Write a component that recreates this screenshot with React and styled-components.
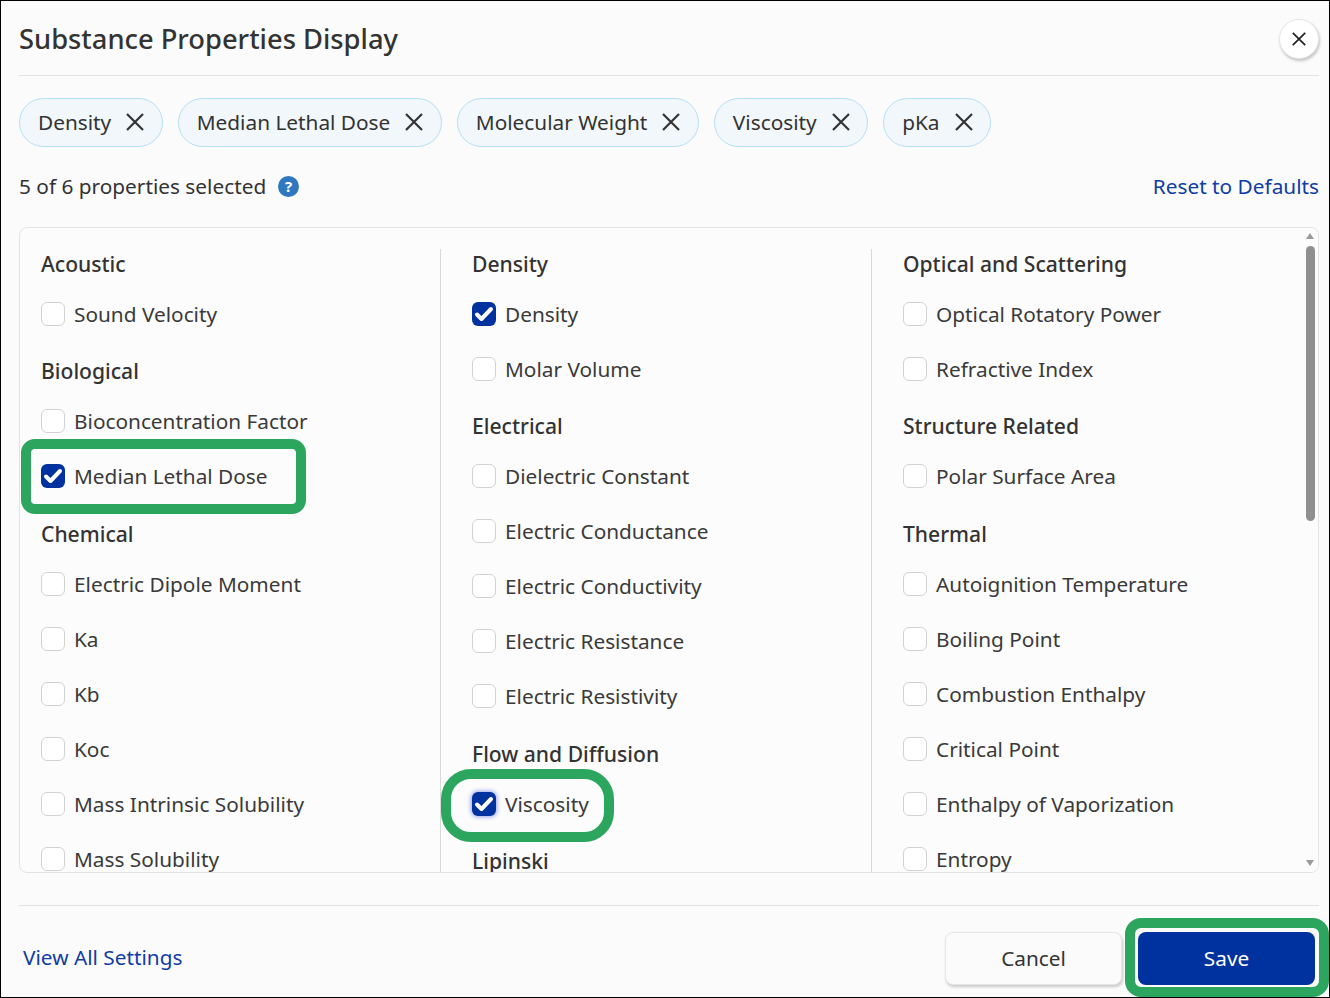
import React from "react";
import styled, { createGlobalStyle } from "styled-components";

const Global = createGlobalStyle`
  html, body { margin: 0; padding: 0; }
  body { font-family: "Noto Sans", "Open Sans", sans-serif; color: #333; }
`;

const Page = styled.div`
  position: relative;
  box-sizing: border-box;
  width: 1330px;
  height: 998px;
  border: 1px solid #000;
  background: #fbfbfb;
  overflow: hidden;
  padding: 0 10px 0 18px;
  display: flex;
  flex-direction: column;
`;

const Header = styled.header`
  height: 74px;
  display: flex;
  align-items: center;
  justify-content: space-between;
  border-bottom: 1px solid #e3e3e3;
  box-sizing: content-box;
`;

const Title = styled.h1`
  margin: 2px 0 0;
  font-size: 27.3px;
  font-weight: 500;
  line-height: 36px;
  color: #333;
`;

const CloseButton = styled.button`
  width: 40px;
  height: 40px;
  margin-top: 2px;
  padding: 0;
  border: 1px solid #e6e6e6;
  border-radius: 50%;
  background: #fff;
  box-shadow: 1px 2px 3px rgba(0, 0, 0, 0.22);
  display: flex;
  align-items: center;
  justify-content: center;
  color: #222;
`;

const Chips = styled.div`
  display: flex;
  gap: 15px;
  margin-top: 22px;
`;

const Chip = styled.div`
  box-sizing: border-box;
  height: 49px;
  display: flex;
  align-items: center;
  gap: 15px;
  padding: 0 17.5px 2px 18px;
  border: 1px solid #b3dff5;
  border-radius: 25px;
  background: #f2f7fc;
  font-size: 20.8px;
  color: #333;
`;

const Status = styled.div`
  display: flex;
  align-items: center;
  justify-content: space-between;
  height: 30px;
  margin-top: 24px;
  margin-bottom: 1px;
  font-size: 20.8px;
`;

const StatusText = styled.div`
  display: flex;
  align-items: center;
  gap: 12px;
`;

const Link = styled.a`
  color: #0f3da6;
  font-size: 20.8px;
  text-decoration: none;
`;

const FooterLink = styled(Link)`
  padding-bottom: 3px;
`;

const Panel = styled.div`
  position: relative;
  box-sizing: border-box;
  height: 646px;
  margin-top: 25px;
  border: 1px solid #e3e3e3;
  border-radius: 8px;
  background: #fcfcfc;
  overflow: hidden;
  display: flex;
  padding: 21px 0 0 21px;
`;

const Column = styled.div`
  box-sizing: border-box;
  flex: none;
  width: ${(p) => p.$width}px;
  padding-left: ${(p) => (p.$first ? 0 : 31)}px;
  border-left: ${(p) => (p.$first ? "none" : "1px solid #d8d8d8")};
`;

const Section = styled.section`
  & + & {
    margin-top: 15px;
  }
`;

const Heading = styled.h2`
  margin: 0 0 7.4px;
  font-size: 21.1px;
  line-height: 30px;
  font-weight: 500;
  color: #333;
`;

const Item = styled.label`
  position: relative;
  height: 55px;
  display: flex;
  align-items: center;
  gap: 9px;
  font-size: 20.8px;
  color: #3a3a3a;
`;

const Box = styled.span`
  box-sizing: border-box;
  flex: none;
  width: 24px;
  height: 24px;
  border-radius: 6px;
  border: ${(p) => (p.$checked ? "none" : "1px solid #d2d2d2")};
  background: ${(p) => (p.$checked ? "#00329f" : "#fff")};
  box-shadow: ${(p) => (p.$glow ? "0 0 4px 1px rgba(60,90,220,.55)" : "none")};
  display: flex;
  align-items: center;
  justify-content: center;
`;

const ScrollBar = styled.div`
  position: absolute;
  top: 0;
  right: 0;
  bottom: 0;
  width: 13px;
  background: #fcfcfc;
`;

const Thumb = styled.div`
  position: absolute;
  top: 18px;
  left: 1px;
  width: 9px;
  height: 275px;
  border-radius: 5px;
  background: #8f8f8f;
`;

const Arrow = styled.div`
  position: absolute;
  left: 1px;
  width: 0;
  height: 0;
  border-left: 4.5px solid transparent;
  border-right: 4.5px solid transparent;
  ${(p) =>
    p.$up
      ? "top: 5px; border-bottom: 6px solid #9a9a9a;"
      : "bottom: 6px; border-top: 6px solid #9a9a9a;"}
`;

const Footer = styled.footer`
  position: relative;
  margin-top: 32px;
  border-top: 1px solid #e3e3e3;
  padding: 26px 4px 0 4px;
  display: flex;
  align-items: center;
  justify-content: space-between;
`;

const Actions = styled.div`
  display: flex;
  gap: 16px;
`;

const Button = styled.button`
  box-sizing: border-box;
  width: 177px;
  height: 53px;
  padding: 0 0 2px;
  border-radius: 8px;
  font-family: inherit;
  font-size: 20.8px;
  border: ${(p) => (p.$primary ? "none" : "1px solid #e6e6e6")};
  color: ${(p) => (p.$primary ? "#fff" : "#333")};
  background: ${(p) => (p.$primary ? "#00329f" : "#fbfbfb")};
  box-shadow: ${(p) => (p.$primary ? "none" : "1px 2px 3px rgba(0,0,0,.2)")};
`;

const Highlight = styled.span`
  position: absolute;
  box-sizing: border-box;
  border: 10px solid #2ca65e;
  pointer-events: none;
  border-radius: ${(p) => p.$radius}px;
  left: ${(p) => p.$left}px;
  top: ${(p) => p.$top}px;
  width: ${(p) => p.$w}px;
  height: ${(p) => p.$h}px;
`;

const XIcon = ({ size = 18 }) => (
  <svg width={size} height={size} viewBox="0 0 18 18" fill="none" stroke="currentColor" strokeWidth="2.2">
    <path d="M1 1 17 17M17 1 1 17" />
  </svg>
);

const Check = () => (
  <svg width="20" height="16" viewBox="0 0 20 16" fill="none" stroke="#fff" strokeWidth="4" strokeLinecap="round" strokeLinejoin="round">
    <path d="M3 8.5 7.5 13 17 3" />
  </svg>
);

const Help = () => (
  <svg width="21" height="21" viewBox="0 0 21 21">
    <circle cx="10.5" cy="10.5" r="10.5" fill="#2f78c0" />
    <text x="10.5" y="16" textAnchor="middle" fontSize="15" fontWeight="700" fill="#fff" fontFamily="Noto Sans">?</text>
  </svg>
);

const chips = ["Density", "Median Lethal Dose", "Molecular Weight", "Viscosity", "pKa"];

const columns = [
  {
    width: 399,
    sections: [
      ["Acoustic", ["Sound Velocity"]],
      ["Biological", ["Bioconcentration Factor", "Median Lethal Dose"]],
      ["Chemical", ["Electric Dipole Moment", "Ka", "Kb", "Koc", "Mass Intrinsic Solubility", "Mass Solubility"]],
    ],
  },
  {
    width: 431,
    sections: [
      ["Density", ["Density", "Molar Volume"]],
      ["Electrical", ["Dielectric Constant", "Electric Conductance", "Electric Conductivity", "Electric Resistance", "Electric Resistivity"]],
      ["Flow and Diffusion", ["Viscosity"]],
      ["Lipinski", []],
    ],
  },
  {
    width: 420,
    sections: [
      ["Optical and Scattering", ["Optical Rotatory Power", "Refractive Index"]],
      ["Structure Related", ["Polar Surface Area"]],
      ["Thermal", ["Autoignition Temperature", "Boiling Point", "Combustion Enthalpy", "Critical Point", "Enthalpy of Vaporization", "Entropy"]],
    ],
  },
];

const checked = new Set(["Density", "Median Lethal Dose", "Viscosity"]);

export default function App() {
  return (
    <Page>
      <Global />
      <Header>
        <Title>Substance Properties Display</Title>
        <CloseButton aria-label="Close"><XIcon size={14} /></CloseButton>
      </Header>
      <Chips>
        {chips.map((c) => (
          <Chip key={c}>{c}<XIcon /></Chip>
        ))}
      </Chips>
      <Status>
        <StatusText>5 of 6 properties selected <Help /></StatusText>
        <Link>Reset to Defaults</Link>
      </Status>
      <Panel>
        {columns.map((col, i) => (
          <Column key={i} $width={col.width} $first={i === 0}>
            {col.sections.map(([title, items]) => (
              <Section key={title}>
                <Heading>{title}</Heading>
                {items.map((it) => (
                  <Item key={it}>
                    <Box $checked={checked.has(it)} $glow={it === "Viscosity"}>
                      {checked.has(it) && <Check />}
                    </Box>
                    {it}
                    {it === "Median Lethal Dose" && <Highlight $left={-20} $top={-10} $w={285} $h={75} $radius={14} />}
                    {it === "Viscosity" && <Highlight $left={-31} $top={-7} $w={173} $h={73} $radius={30} />}
                  </Item>
                ))}
              </Section>
            ))}
          </Column>
        ))}
        <ScrollBar>
          <Arrow $up />
          <Thumb />
          <Arrow />
        </ScrollBar>
      </Panel>
      <Footer>
        <FooterLink>View All Settings</FooterLink>
        <Actions>
          <Button>Cancel</Button>
          <Button $primary>Save</Button>
        </Actions>
        <Highlight $left={1106} $top={12} $w={204} $h={79} $radius={16} />
      </Footer>
    </Page>
  );
}
